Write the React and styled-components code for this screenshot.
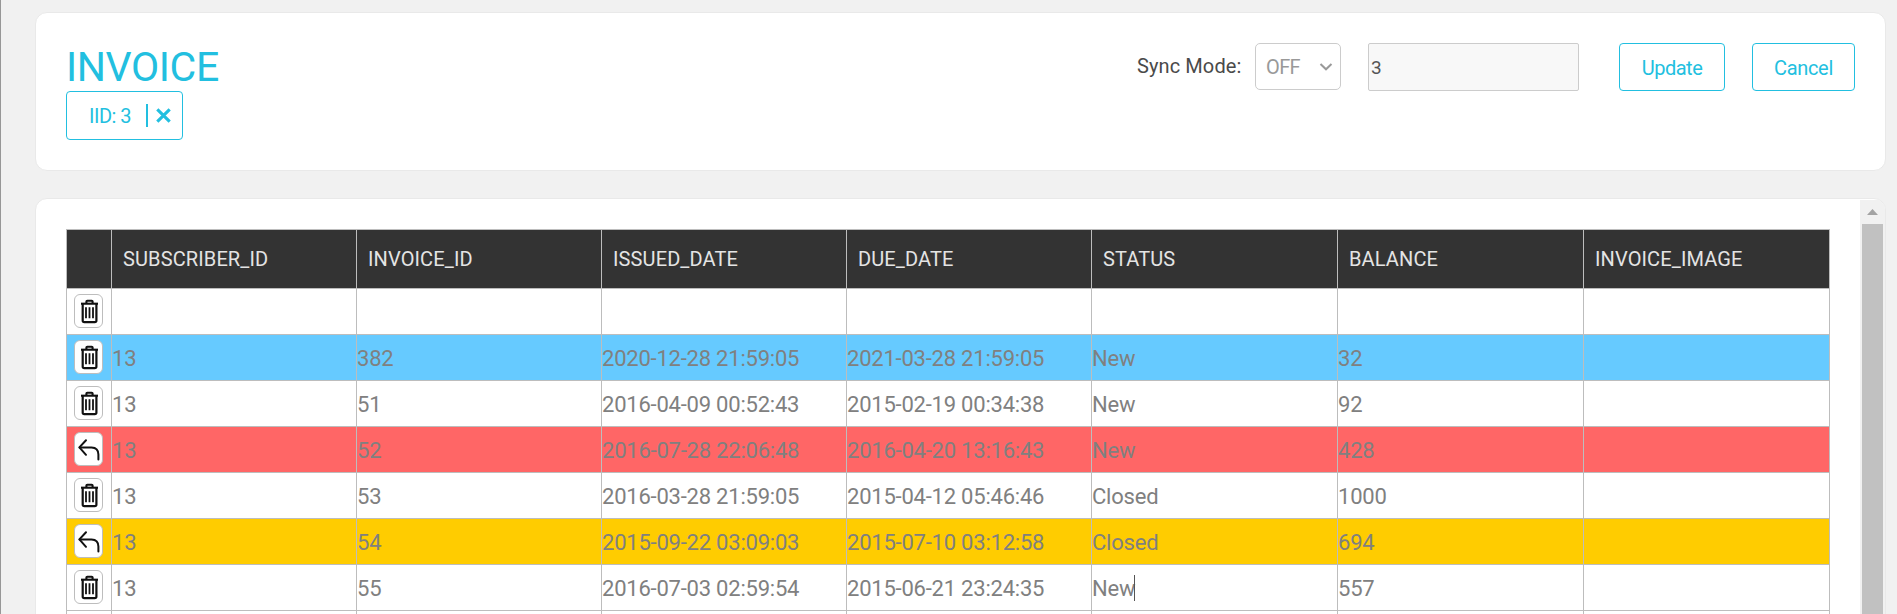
import React from "react";
import styled, { createGlobalStyle } from "styled-components";

const GlobalStyle = createGlobalStyle`
  * { box-sizing: border-box; }
  html, body, #root { height: 100%; }
  body {
    margin: 0;
    overflow: hidden;
    background: #f1f1f1;
    color: #4a4a4a;
    font-family: Roboto, "Liberation Sans", sans-serif;
  }
`;

const Page = styled.div`
  height: 100%;
  border-left: 1px solid #979797;
  padding: 12px 11px 0 34px;
  display: flex;
  flex-direction: column;
  gap: 27px;
  overflow: hidden;
`;

const Card = styled.section`
  background: #fff;
  border: 1px solid #e9e9e9;
  border-radius: 12px;
  flex: none;
`;

const HeaderCard = styled(Card)`
  height: 159px;
  padding: 30px 30px 0;
  display: flex;
  justify-content: space-between;
  align-items: flex-start;
`;

const Heading = styled.div`
  display: flex;
  flex-direction: column;
  align-items: flex-start;
`;

const Title = styled.h1`
  margin: 0;
  height: 48px;
  line-height: 48px;
  font-size: 41px;
  font-weight: 400;
  letter-spacing: -0.4px;
  color: #22bfe0;
`;

const FilterChip = styled.div`
  width: 117px;
  height: 49px;
  display: flex;
  align-items: center;
  padding-left: 22px;
  border: 1px solid #22bfe0;
  border-radius: 4px;
  color: #22bfe0;
  font-size: 20px;
  letter-spacing: -0.5px;
`;

const ChipLabel = styled.span`
  width: 57px;
  padding-top: 1px;
  white-space: nowrap;
`;

const ChipDivider = styled.span`
  width: 2px;
  height: 23px;
  margin-right: 8px;
  background: #22bfe0;
`;

const Controls = styled.div`
  display: flex;
  align-items: flex-start;
`;

const Label = styled.span`
  width: 118px;
  line-height: 46px;
  font-size: 20px;
  letter-spacing: 0.1px;
`;

const SelectBox = styled.div`
  width: 86px;
  height: 47px;
  margin-right: 27px;
  padding: 0 7px 0 10px;
  display: flex;
  align-items: center;
  justify-content: space-between;
  border: 1px solid #ccc;
  border-radius: 5px;
  color: #999;
  font-size: 20px;
  letter-spacing: -0.6px;
`;

const TextInput = styled.input`
  width: 211px;
  height: 48px;
  margin: 0 40px 0 0;
  padding: 0 2px;
  border: 1px solid #ccc;
  border-radius: 2px;
  background: #f8f8f8;
  color: #555;
  font: 400 19px Roboto, "Liberation Sans", sans-serif;
  outline: none;
`;

const Button = styled.button`
  width: ${(p) => p.$width}px;
  height: 48px;
  padding: 1px 0 0;
  border: 1px solid #22bfe0;
  border-radius: 4px;
  background: #fff;
  color: #22bfe0;
  font: 400 20px Roboto, "Liberation Sans", sans-serif;
  letter-spacing: ${(p) => p.$tracking}px;
  & + & { margin-left: 27px; }
`;

const TableCard = styled(Card)`
  height: 520px;
  display: flex;
  justify-content: space-between;
  padding: 1px 0 0;
  overflow: hidden;
`;

const TableArea = styled.div`
  padding: 29px 0 0 30px;
`;

const Table = styled.div`
  border: 1px solid #bdbdbd;
  border-width: 1px 0 0 1px;
`;

const Row = styled.div`
  display: grid;
  grid-template-columns: 45px repeat(4, 245px) repeat(3, 246px);
  height: 46px;
  background: ${(p) => p.$color || "#fff"};
`;

const HeadRow = styled(Row)`
  height: 59px;
  background: #333;
`;

const Cell = styled.div`
  display: flex;
  align-items: center;
  border: 1px solid #bdbdbd;
  border-width: 0 1px 1px 0;
  padding-top: 1px;
  color: #808080;
  font-size: 22px;
  letter-spacing: -0.22px;
  white-space: nowrap;
`;

const HeadCell = styled(Cell)`
  padding: 0 0 0 11px;
  color: #e4e4e4;
  font-size: 20px;
  letter-spacing: 0.12px;
`;

const ActionCell = styled(Cell)`
  align-items: flex-start;
  padding: 5px 0 0 7px;
`;

const IconButton = styled.button`
  width: 29px;
  height: 34px;
  padding: 0;
  display: flex;
  border: 1px solid #bdbdbd;
  border-radius: 6px;
  background: #fff;
`;

const Caret = styled.span`
  width: 1px;
  height: 26px;
  margin-left: -1px;
  background: #555;
`;

const Scrollbar = styled.div`
  width: 25px;
  display: flex;
  flex-direction: column;
  align-items: center;
  background: #f1f1f1;
`;

const ScrollUp = styled.div`
  height: 24px;
  padding-top: 9px;
  svg { display: block; }
`;

const ScrollThumb = styled.div`
  width: 21px;
  flex: 1;
  background: #c1c1c1;
`;

const TrashIcon = () => (
  <svg width="27" height="32" viewBox="0 0 27 32" fill="none" stroke="#111">
    <path d="M6 8.7H23" strokeWidth="2.1" />
    <path d="M11.4 8.2V6.6Q11.4 5.7 12.3 5.7H16.7Q17.6 5.7 17.6 6.6V8.2" strokeWidth="2.1" />
    <path d="M7.7 9V25.6Q7.7 27.2 9.3 27.2H19.8Q21.4 27.2 21.4 25.6V9" strokeWidth="2.2" />
    <path d="M11 12.2V23.2M14.5 12.2V23.2M18 12.2V23.2" strokeWidth="1.8" />
  </svg>
);

const UndoIcon = () => (
  <svg width="27" height="32" viewBox="0 0 27 32" fill="none" stroke="#111" strokeWidth="2" strokeLinecap="round">
    <path d="M11 7.2L4.4 14.4L11 21.8" strokeLinejoin="round" />
    <path d="M4.6 14.4H16.5Q23.4 14.6 23.4 21.5V26.4" />
  </svg>
);

const CloseIcon = () => (
  <svg width="15" height="15" viewBox="0 0 15 15" stroke="#22bfe0" strokeWidth="3.1">
    <path d="M1.3 1.3L13.7 13.7M13.7 1.3L1.3 13.7" />
  </svg>
);

const ChevronIcon = () => (
  <svg width="14" height="8" viewBox="0 0 14 8" fill="none" stroke="#999" strokeWidth="2">
    <path d="M1.5 1L7 6.3L12.5 1" />
  </svg>
);

const columns = ["SUBSCRIBER_ID", "INVOICE_ID", "ISSUED_DATE", "DUE_DATE", "STATUS", "BALANCE", "INVOICE_IMAGE"];

const rows = [
  { values: ["", "", "", "", "", "", ""] },
  { color: "#66caff", values: ["13", "382", "2020-12-28 21:59:05", "2021-03-28 21:59:05", "New", "32", ""] },
  { values: ["13", "51", "2016-04-09 00:52:43", "2015-02-19 00:34:38", "New", "92", ""] },
  { color: "#ff6666", undo: true, values: ["13", "52", "2016-07-28 22:06:48", "2016-04-20 13:16:43", "New", "428", ""] },
  { values: ["13", "53", "2016-03-28 21:59:05", "2015-04-12 05:46:46", "Closed", "1000", ""] },
  { color: "#ffcc00", undo: true, values: ["13", "54", "2015-09-22 03:09:03", "2015-07-10 03:12:58", "Closed", "694", ""] },
  { editing: 4, values: ["13", "55", "2016-07-03 02:59:54", "2015-06-21 23:24:35", "New", "557", ""] },
];

export default function App() {
  return (
    <>
      <GlobalStyle />
      <Page>
        <HeaderCard>
          <Heading>
            <Title>INVOICE</Title>
            <FilterChip>
              <ChipLabel>IID: 3</ChipLabel>
              <ChipDivider />
              <CloseIcon />
            </FilterChip>
          </Heading>
          <Controls>
            <Label>Sync Mode:</Label>
            <SelectBox>
              OFF
              <ChevronIcon />
            </SelectBox>
            <TextInput defaultValue="3" />
            <Button $width={106} $tracking={-0.5}>Update</Button>
            <Button $width={103} $tracking={-0.35}>Cancel</Button>
          </Controls>
        </HeaderCard>
        <TableCard>
          <TableArea>
            <Table>
              <HeadRow>
                <HeadCell />
                {columns.map((name) => (
                  <HeadCell key={name}>{name}</HeadCell>
                ))}
              </HeadRow>
              {rows.map((row, i) => (
                <Row key={i} $color={row.color}>
                  <ActionCell>
                    <IconButton>{row.undo ? <UndoIcon /> : <TrashIcon />}</IconButton>
                  </ActionCell>
                  {row.values.map((value, c) => (
                    <Cell key={c}>
                      {value}
                      {row.editing === c && <Caret />}
                    </Cell>
                  ))}
                </Row>
              ))}
              <Row>
                <ActionCell />
                {columns.map((name) => (
                  <Cell key={name} />
                ))}
              </Row>
            </Table>
          </TableArea>
          <Scrollbar>
            <ScrollUp>
              <svg width="11" height="6" viewBox="0 0 11 6">
                <path d="M0 6L5.5 0L11 6Z" fill="#a3a3a3" />
              </svg>
            </ScrollUp>
            <ScrollThumb />
          </Scrollbar>
        </TableCard>
      </Page>
    </>
  );
}
